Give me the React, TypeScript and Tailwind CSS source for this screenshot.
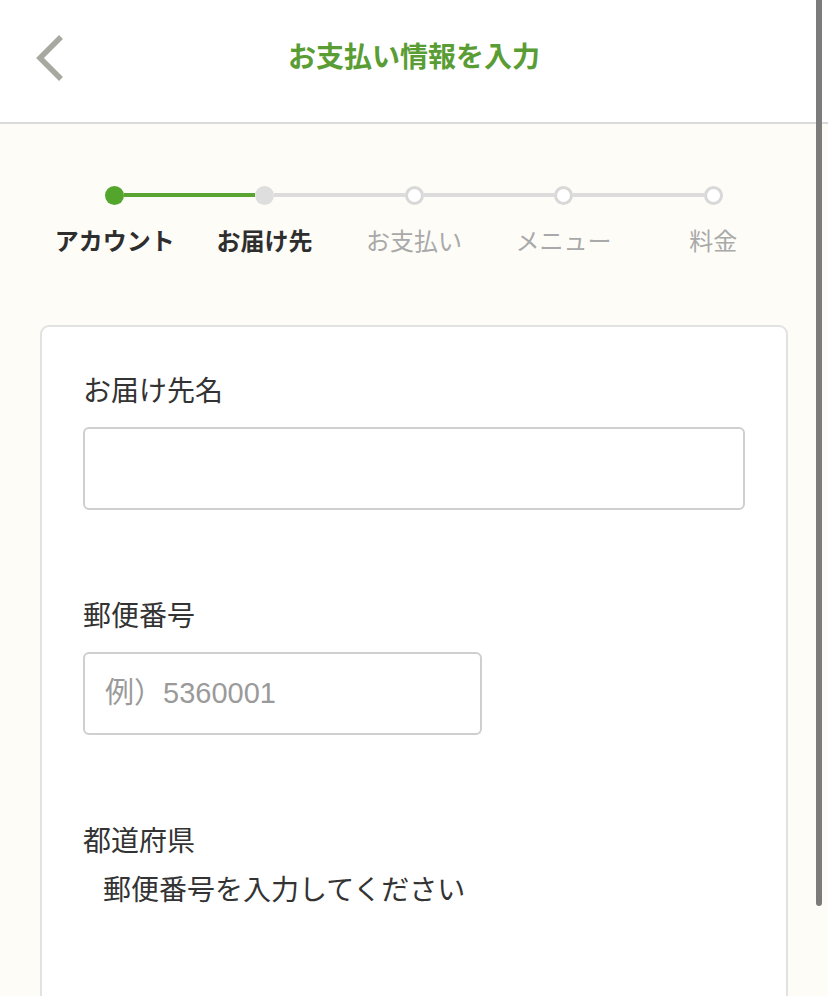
import React from "react";

const steps = [
  { label: "アカウント", state: "done" },
  { label: "お届け先", state: "current" },
  { label: "お支払い", state: "todo" },
  { label: "メニュー", state: "todo" },
  { label: "料金", state: "todo" },
];

function Step({ label, state, index }: { label: string; state: string; index: number }) {
  const leftColor = index === 0 ? "bg-transparent" : index <= 1 ? "bg-[#5aa532]" : "bg-[#dcdcdc]";
  const rightColor = index === 4 ? "bg-transparent" : index < 1 ? "bg-[#5aa532]" : "bg-[#dcdcdc]";
  const dot =
    state === "done"
      ? "bg-[#54a52b]"
      : state === "current"
      ? "bg-[#dedede]"
      : "bg-white border-[3px] border-[#d8d8d8]";
  const text = state === "todo" ? "text-[#a9a9a9] font-normal" : "text-[#2e2e2e] font-bold";
  return (
    <div className="flex flex-col items-center">
      <div className="flex items-center w-full h-[20px]">
        <div className={`flex-1 h-[4px] ${leftColor}`} />
        <div className={`w-[19px] h-[19px] rounded-full shrink-0 ${dot}`} />
        <div className={`flex-1 h-[4px] ${rightColor}`} />
      </div>
      <div className={`mt-[19px] text-[24px] leading-[32px] whitespace-nowrap ${text}`}>{label}</div>
    </div>
  );
}

export default function App() {
  return (
    <div className="relative min-h-screen bg-[#fdfcf7] font-['Noto_Sans_CJK_JP',sans-serif] overflow-hidden">
      <div className="relative h-[124px] bg-white border-b-2 border-[#dadada] flex items-center justify-center">
        <svg className="absolute left-[31px] top-[32px]" width="40" height="52" viewBox="0 0 40 52">
          <polyline points="30,5 9,26 30,47" fill="none" stroke="#a7a9a0" strokeWidth="5.5" strokeLinecap="butt" strokeLinejoin="miter" />
        </svg>
        <h1 className="text-[28px] font-bold text-[#5a9d34] leading-none -mt-[12px]">お支払い情報を入力</h1>
      </div>

      <div className="grid grid-cols-5 mx-10 mt-[61px]">
        {steps.map((s, i) => (
          <Step key={s.label} label={s.label} state={s.state} index={i} />
        ))}
      </div>

      <div className="mx-10 mt-[69px] bg-white border-2 border-[#e2e2e2] rounded-[9px] px-[41px] pt-[42px] pb-[200px]">
        <div className="text-[28px] leading-[40px] text-[#333]">お届け先名</div>
        <div className="mt-[18px] h-[83px] border-2 border-[#cfcfcf] rounded-[6px] bg-white" />

        <div className="mt-[84px] text-[28px] leading-[40px] text-[#333]">郵便番号</div>
        <div className="mt-[18px] h-[83px] w-[399px] border-2 border-[#cfcfcf] rounded-[6px] bg-white flex items-center pl-[20px]">
          <span className="text-[29px] text-[#9a9a9a] font-['Liberation_Sans','Noto_Sans_CJK_JP',sans-serif]">例）5360001</span>
        </div>

        <div className="mt-[84px] text-[28px] leading-[40px] text-[#333]">都道府県</div>
        <div className="mt-[9px] pl-[20px] text-[28px] leading-[40px] text-[#333]">郵便番号を入力してください</div>
      </div>

      <div className="absolute right-[6px] top-0 w-[6px] h-[906px] bg-[#7b7b7b] rounded-b-[3px]" />
    </div>
  );
}
